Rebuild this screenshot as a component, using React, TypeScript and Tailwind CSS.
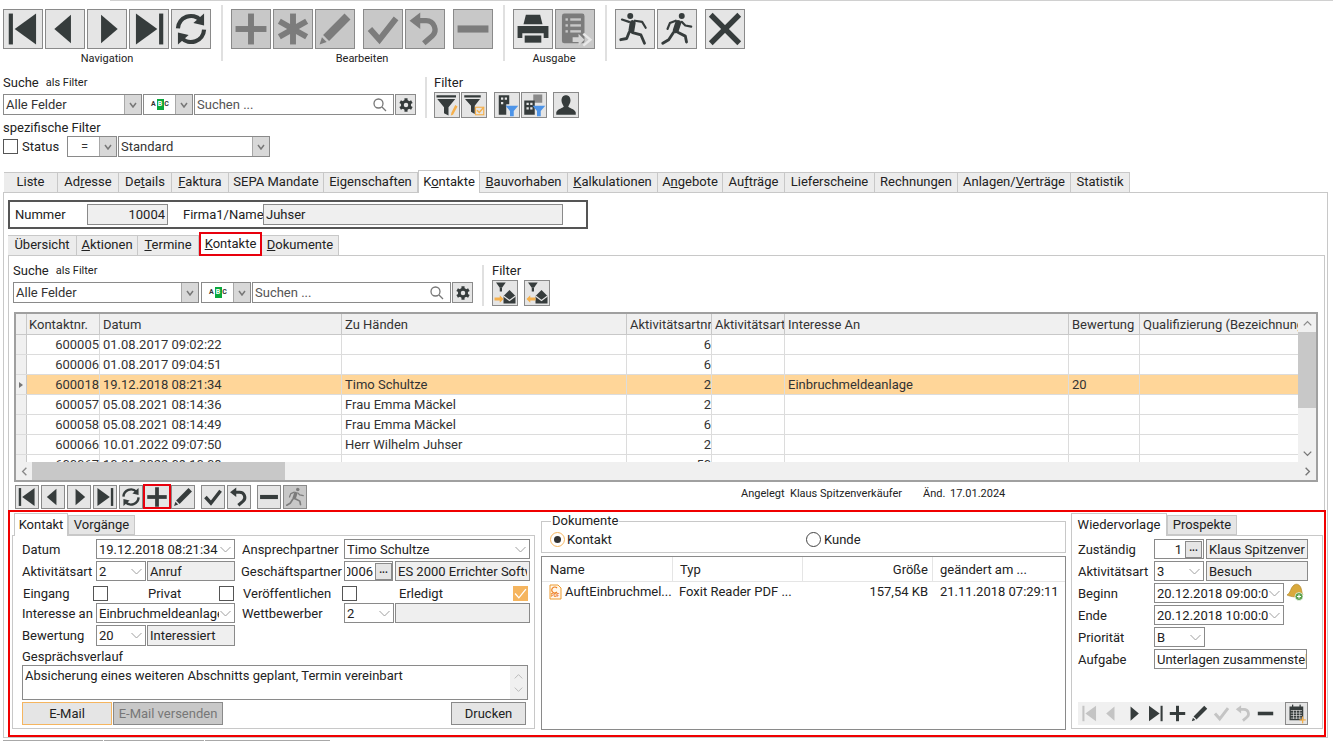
import type { ReactNode } from "react";

type IconName =
  | "first" | "prev" | "next" | "last" | "refresh" | "plus" | "asterisk" | "pencil" | "check" | "undo" | "minus"
  | "printer" | "report" | "run1" | "run2" | "close" | "funnelEdit" | "funnelCheck" | "houseFilter" | "officeFilter"
  | "person" | "mailIn" | "mailOut" | "calendar" | "gear";

// Toolbar glyphs, all drawn on the same 32x32 grid
function Icon({ name, className = "w-[38px] h-[38px]" }: { name: IconName; className?: string }) {
  const glyphs: Record<IconName, ReactNode> = {
    first: <><rect x="4" y="3" width="3.500" height="26" /><polygon points="27,3 27,29 9,16" /></>,
    prev: <polygon points="21,4 21,28 7,16" />,
    next: <polygon points="11,4 11,28 25,16" />,
    last: <><polygon points="5,3 5,29 23,16" /><rect x="24.500" y="3" width="3.500" height="26" /></>,
    refresh: (
      <>
        <path d="M5 15.5A11 11 0 0 1 24 8.500" fill="none" stroke="currentColor" strokeWidth="3.500" />
        <polygon points="27,3 27,13 18,11" />
        <path d="M27 16.500A11 11 0 0 1 8 23.500" fill="none" stroke="currentColor" strokeWidth="3.500" />
        <polygon points="5,29 5,19 14,21" />
      </>
    ),
    plus: <><rect x="13.500" y="3" width="5" height="26" /><rect x="3" y="13.500" width="26" height="5" /></>,
    asterisk: (
      <g stroke="currentColor" strokeWidth="5">
        <line x1="16" y1="3" x2="16" y2="29" />
        <line x1="4.500" y1="9.500" x2="27.500" y2="22.500" />
        <line x1="4.500" y1="22.500" x2="27.500" y2="9.500" />
      </g>
    ),
    pencil: <><polygon points="24,3 29,8 11,26 6,21" /><polygon points="5,23 9,27 3,29" /></>,
    check: <polyline points="5,16 13,25 27,7" fill="none" stroke="currentColor" strokeWidth="5" />,
    undo: (
      <>
        <path d="M10 9h7a7.500 7.500 0 0 1 5 13l-7 6" fill="none" stroke="currentColor" strokeWidth="4.500" />
        <polygon points="12,2 12,16 3,9" />
      </>
    ),
    minus: <rect x="3" y="13" width="26" height="6" />,
    printer: (
      <>
        <polygon points="10,4 22,4 24,12 8,12" />
        <path d="M3 13.500h26v10h-4v-4H7v4H3z" />
        <rect x="9" y="21.500" width="14" height="6" />
      </>
    ),
    report: (
      <>
        <rect x="5" y="3" width="19" height="25" rx="2" />
        <g fill="#c8c8c8">
          <rect x="8" y="7" width="2" height="2" /><rect x="12" y="7" width="9" height="2" />
          <rect x="8" y="12" width="2" height="2" /><rect x="12" y="12" width="9" height="2" />
          <rect x="8" y="17" width="2" height="2" /><rect x="12" y="17" width="9" height="2" />
        </g>
        <polygon points="14,23 19,23 19,20 24,25 19,30 19,27 14,27" fill="#d4d4d4" />
        <polyline points="23,20 29,25 23,30" fill="none" stroke="#e8e8e8" strokeWidth="2" />
      </>
    ),
    run1: (
      <>
        <circle cx="12" cy="5" r="2.500" />
        <g fill="none" stroke="currentColor" strokeLinecap="round" strokeLinejoin="round">
          <path d="M14 11l-1 6" strokeWidth="5" />
          <path d="M11 10L5 8M16 9l6 1 3 5" strokeWidth="1.800" />
          <path d="M14 19l7 2 3 7M11 19l-2 5-5 1" strokeWidth="2.400" />
        </g>
      </>
    ),
    run2: (
      <>
        <circle cx="20" cy="5" r="2.500" />
        <g fill="none" stroke="currentColor" strokeLinecap="round" strokeLinejoin="round">
          <path d="M17 11l-2 6" strokeWidth="5" />
          <path d="M15 9l-5 2-2 5M20 10l3 3 5 1" strokeWidth="1.800" />
          <path d="M17 19l6 3 1 5M13 19l-4 6-5 3" strokeWidth="2.400" />
        </g>
      </>
    ),
    close: (
      <g stroke="currentColor" strokeWidth="4.500">
        <line x1="4" y1="4" x2="28" y2="28" />
        <line x1="28" y1="4" x2="4" y2="28" />
      </g>
    ),
    funnelEdit: (
      <>
        <rect x="2" y="3" width="26" height="3" />
        <polygon points="3,8 27,8 18,19 18,30 12,27 12,19" />
        <polygon points="27,16 30,18 24,29 21,30 22,26" fill="#f5b04c" />
      </>
    ),
    funnelCheck: (
      <>
        <rect x="3" y="3" width="22" height="3" />
        <polygon points="4,8 24,8 17,17 17,28 12,25 12,17" />
        <rect x="18" y="19" width="11" height="10" fill="none" stroke="#f5b04c" strokeWidth="1.500" />
        <polyline points="20,23 23,26 29,19" fill="none" stroke="#f5b04c" strokeWidth="2" />
      </>
    ),
    houseFilter: (
      <>
        <path d="M5 3h14v12h-4v14H5z" />
        <g fill="#e5e5e5">
          <rect x="8" y="6" width="3" height="3" /><rect x="13" y="6" width="3" height="3" />
          <rect x="8" y="12" width="3" height="3" />
        </g>
        <polygon points="14,17 31,17 25,24 25,31 20,31 20,24" fill="#4d94e8" />
      </>
    ),
    officeFilter: (
      <>
        <rect x="15" y="2" width="12" height="11" fill="#8a8a8a" />
        <path d="M3 10h14v19H3z" />
        <g fill="#e5e5e5">
          <rect x="6" y="13" width="3" height="3" /><rect x="11" y="13" width="3" height="3" />
          <rect x="6" y="19" width="3" height="3" /><rect x="11" y="19" width="3" height="3" />
        </g>
        <polygon points="14,17 31,17 25,24 25,31 20,31 20,24" fill="#4d94e8" />
      </>
    ),
    person: <path d="M16 3c4 0 6 3 6 7 0 3-2 6-3 8 0 2 9 3 10 8v3H3v-3c1-5 10-6 10-8-1-2-3-5-3-8 0-4 2-7 6-7z" />,
    mailIn: (
      <>
        <polygon points="4,2 17,2 12,9 9,9" />
        <rect x="9" y="9" width="3" height="5" />
        <path d="M14 20l8-8 8 8v10H14z" />
        <polyline points="14,20 22,26 30,20" fill="none" stroke="#e5e5e5" strokeWidth="1.500" />
        <polygon points="2,22 9,22 9,19 14,24 9,29 9,26 2,26" fill="#f5b04c" />
      </>
    ),
    mailOut: (
      <>
        <polygon points="4,2 17,2 12,9 9,9" />
        <rect x="9" y="9" width="3" height="5" />
        <path d="M14 20l8-8 8 8v10H14z" />
        <polyline points="14,20 22,26 30,20" fill="none" stroke="#e5e5e5" strokeWidth="1.500" />
        <polygon points="14,22 7,22 7,19 2,24 7,29 7,26 14,26" fill="#f5b04c" />
      </>
    ),
    calendar: (
      <>
        <rect x="4" y="4" width="22" height="22" />
        <rect x="8" y="1" width="2" height="5" /><rect x="20" y="1" width="2" height="5" />
        <g fill="#e5e5e5">
          <rect x="6" y="10" width="18" height="1" /><rect x="6" y="14" width="18" height="1" />
          <rect x="6" y="18" width="18" height="1" /><rect x="6" y="22" width="18" height="1" />
          <rect x="10" y="10" width="1" height="14" /><rect x="15" y="10" width="1" height="14" />
          <rect x="20" y="10" width="1" height="14" />
        </g>
        <rect x="24" y="20" width="2" height="11" fill="#f5b04c" />
        <rect x="20" y="24.500" width="10" height="2" fill="#f5b04c" />
      </>
    ),
    gear: (
      <>
        <g stroke="currentColor" strokeWidth="5.500">
          <line x1="16" y1="4" x2="16" y2="28" />
          <line x1="5.600" y1="10" x2="26.400" y2="22" />
          <line x1="5.600" y1="22" x2="26.400" y2="10" />
        </g>
        <circle cx="16" cy="16" r="9" />
        <circle cx="16" cy="16" r="4" fill="#e5e5e5" />
      </>
    ),
  };
  return (
    <svg viewBox="0 0 32 32" fill="currentColor" className={className}>
      {glyphs[name]}
    </svg>
  );
}

function BigButton({ icon, off, className = "" }: { icon: IconName; off?: boolean; className?: string }) {
  return (
    <div
      className={`w-[40px] h-[40px] flex items-center justify-center border border-[#8a8a8a] ${
        off ? "bg-[#c8c8c8] text-[#7c7c7c]" : "bg-[#e5e5e5] text-[#363c3c]"
      } ${className}`}
    >
      <Icon name={icon} />
    </div>
  );
}

function MidButton({ icon, className = "" }: { icon: IconName; className?: string }) {
  return (
    <div className={`w-[26px] h-[26px] flex items-center justify-center border border-[#8a8a8a] bg-[#e5e5e5] text-[#363c3c] ${className}`}>
      <Icon name={icon} className="w-[24px] h-[24px]" />
    </div>
  );
}

function GearButton() {
  return (
    <div className="w-[21px] h-[21px] ml-px flex items-center justify-center border border-[#8a8a8a] bg-[#e5e5e5] text-[#363c3c]">
      <Icon name="gear" className="w-[18px] h-[18px]" />
    </div>
  );
}

function SmallButton({ icon, className = "" }: { icon: IconName; className?: string }) {
  return (
    <div className={`w-[24px] h-[24px] flex items-center justify-center border border-[#8a8a8a] bg-[#e5e5e5] text-[#363c3c] ${className}`}>
      <Icon name={icon} className="w-[22px] h-[22px]" />
    </div>
  );
}

function Chevron({ className, weight = "1" }: { className: string; weight?: string }) {
  return (
    <svg viewBox="0 0 12 7" className={`h-[7px] ${className}`} fill="none" stroke="currentColor" strokeWidth={weight}>
      <polyline points="1,1 6,6 11,1" />
    </svg>
  );
}

// Combo of the search bars: grey arrow cell on the right
function SearchCombo({ className, children }: { className: string; children: ReactNode }) {
  return (
    <div className={`flex items-stretch h-[21px] border border-[#8a8a8a] bg-white ${className}`}>
      <div className="flex-1 min-w-0 flex items-center pl-[2px] pt-px text-[#333] whitespace-nowrap overflow-hidden">{children}</div>
      <div className="w-[17px] shrink-0 flex items-center justify-center bg-[#d8d8d8] border-l border-[#a8a8a8]">
        <svg viewBox="0 0 8 6" className="w-[8px] h-[6px] text-[#777]" fill="none" stroke="currentColor" strokeWidth="1.500">
          <polyline points="1,1 4,5 7,1" />
        </svg>
      </div>
    </div>
  );
}

function AbcMark() {
  return (
    <div className="flex-1 flex items-center justify-center text-[7px] leading-none font-bold text-[#333] tracking-[1px] -mt-px">
      <span>A</span>
      <span className="bg-[#0aa83c] text-white px-[1px] py-[2px]">B</span>
      <span>C</span>
    </div>
  );
}

function SearchField({ className }: { className: string }) {
  return (
    <div className={`flex items-center justify-between h-[21px] border border-[#8a8a8a] bg-white pl-[2px] pr-[6px] text-[#555] ${className}`}>
      <span className="pt-px">Suchen ...</span>
      <svg viewBox="0 0 14 14" className="w-[14px] h-[14px] text-[#777]" fill="none" stroke="currentColor" strokeWidth="1.300">
        <circle cx="5.500" cy="5.500" r="4.500" />
        <line x1="9" y1="9" x2="13" y2="13" />
      </svg>
    </div>
  );
}

// Form combo with the thin chevron
function Combo({ className, children }: { className: string; children: ReactNode }) {
  return (
    <div className={`flex items-center justify-between border border-[#8a8a8a] bg-white pl-[2px] pr-[2px] pt-px whitespace-nowrap overflow-hidden ${className}`}>
      <span className="overflow-hidden flex-1 min-w-0">{children}</span>
      <Chevron className="w-[13px] text-[#a0a0a0] shrink-0 -mt-px" />
    </div>
  );
}

function ReadOnly({ className, children }: { className: string; children?: ReactNode }) {
  return (
    <div className={`flex items-center border border-[#8a8a8a] bg-[#efefef] pl-[2px] pt-px whitespace-nowrap ${className}`}>
      <span className="min-w-0 overflow-hidden mr-[2px]">{children}</span>
    </div>
  );
}

function Dots() {
  return (
    <div className="w-[17px] h-[17px] shrink-0 flex items-center justify-center border border-[#8a8a8a] bg-[#e5e5e5] -mt-px text-[10px] leading-none font-bold pb-[3px]">
      ...
    </div>
  );
}

function Check({ className = "" }: { className?: string }) {
  return <div className={`w-[15px] h-[15px] border border-[#555] bg-white shrink-0 ${className}`} />;
}

const mainTabs: { pre: string; key?: string; post?: string; w: string; active?: boolean }[] = [
  { pre: "Liste", w: "w-[54px]" },
  { pre: "Ad", key: "r", post: "esse", w: "w-[61px]" },
  { pre: "De", key: "t", post: "ails", w: "w-[53px]" },
  { pre: "", key: "F", post: "aktura", w: "w-[57px]" },
  { pre: "SEPA Mandate", w: "w-[95px]" },
  { pre: "Ei", key: "g", post: "enschaften", w: "w-[94px]" },
  { pre: "K", key: "o", post: "ntakte", w: "w-[62px]", active: true },
  { pre: "", key: "B", post: "auvorhaben", w: "w-[88px]" },
  { pre: "", key: "K", post: "alkulationen", w: "w-[90px]" },
  { pre: "A", key: "n", post: "gebote", w: "w-[65px]" },
  { pre: "Au", key: "f", post: "träge", w: "w-[62px]" },
  { pre: "Lieferscheine", w: "w-[90px]" },
  { pre: "Rechnun", key: "g", post: "en", w: "w-[83px]" },
  { pre: "Anlagen/", key: "V", post: "erträge", w: "w-[113px]" },
  { pre: "Statistik", w: "w-[59px]" },
];

const subTabs: { pre: string; key?: string; post?: string; w: string }[] = [
  { pre: "Übersicht", w: "w-[69px]" },
  { pre: "", key: "A", post: "ktionen", w: "w-[61px]" },
  { pre: "", key: "T", post: "ermine", w: "w-[61px]" },
];

function Label({ pre, k, post }: { pre: string; k?: string; post?: string }) {
  return (
    <span>
      {pre}
      {k && <u>{k}</u>}
      {post}
    </span>
  );
}

const gridCols = ["w-[73px]", "w-[242px]", "w-[285px]", "w-[85px]", "w-[73px]", "w-[284px]", "w-[71px]", "w-[160px]"];
const gridHead = ["Kontaktnr.", "Datum", "Zu Händen", "Aktivitätsartnr", "Aktivitätsart", "Interesse An", "Bewertung", "Qualifizierung (Bezeichnung)"];
const gridRows: { cells: string[]; sel?: boolean }[] = [
  { cells: ["600005", "01.08.2017 09:02:22", "", "6", "", "", "", ""] },
  { cells: ["600006", "01.08.2017 09:04:51", "", "6", "", "", "", ""] },
  { cells: ["600018", "19.12.2018 08:21:34", "Timo Schultze", "2", "", "Einbruchmeldeanlage", "20", ""], sel: true },
  { cells: ["600057", "05.08.2021 08:14:36", "Frau Emma Mäckel", "2", "", "", "", ""] },
  { cells: ["600058", "05.08.2021 08:14:49", "Frau Emma Mäckel", "6", "", "", "", ""] },
  { cells: ["600066", "10.01.2022 09:07:50", "Herr Wilhelm Juhser", "2", "", "", "", ""] },
  { cells: ["600067", "10.01.2022 09:10:08", "", "50", "", "", "", ""] },
];

function ContactGrid() {
  return (
    <div className="ml-[5px] mt-[6px] w-[1304px] h-[170px] border-2 border-[#a0a0a0] flex flex-col">
      <div className="flex flex-1 min-h-0">
        <div className="flex-1 min-w-0 overflow-hidden">
          <div className="flex h-[21px] bg-[#f0f0f0] border-b border-[#c8c8c8] text-[#333]">
            <div className="w-[11px] shrink-0 border-r border-[#c8c8c8]" />
            {gridHead.map((h, i) => (
              <div
                key={h}
                className={`${gridCols[i]} shrink-0 border-r border-[#c8c8c8] overflow-hidden whitespace-nowrap leading-[21px] ${
                  i === 0 ? "pl-[2px]" : "pl-[3px]"
                }`}
              >
                {h}
              </div>
            ))}
          </div>
          {gridRows.map((row) => (
            <div key={row.cells[0]} className={`flex h-[20px] border-b border-[#dcdcdc] text-[#333] ${row.sel ? "bg-[#ffd699]" : "bg-white"}`}>
              <div className="w-[11px] shrink-0 bg-[#f0f0f0] border-r border-[#c8c8c8] flex items-center justify-center">
                {row.sel && <div className="w-0 h-0 border-y-[3px] border-y-transparent border-l-[4px] border-l-[#777]" />}
              </div>
              {row.cells.map((c, i) => (
                <div
                  key={i}
                  className={`${gridCols[i]} shrink-0 border-r border-[#dcdcdc] overflow-hidden whitespace-nowrap leading-[20px] ${
                    i === 0 || i === 3 ? "text-right" : "pl-[3px]"
                  }`}
                >
                  {c}
                </div>
              ))}
            </div>
          ))}
        </div>
        <div className="w-[18px] shrink-0 bg-[#f0f0f0] flex flex-col items-center">
          <div className="h-[18px] flex items-center justify-center">
            <Chevron className="w-[9px] text-[#8a8a8a] rotate-180" weight="1.800" />
          </div>
          <div className="w-full h-[76px] bg-[#c8c8c8]" />
          <div className="flex-1" />
          <div className="h-[18px] flex items-center justify-center">
            <Chevron className="w-[9px] text-[#777]" weight="1.800" />
          </div>
        </div>
      </div>
      <div className="h-[18px] shrink-0 bg-[#f0f0f0] flex items-stretch">
        <div className="w-[16px] flex items-center justify-center">
          <Chevron className="w-[9px] text-[#8a8a8a] rotate-90" weight="1.800" />
        </div>
        <div className="w-[253px] bg-[#c8c8c8]" />
        <div className="flex-1" />
        <div className="w-[18px] flex items-center justify-center">
          <Chevron className="w-[9px] text-[#777] -rotate-90" weight="1.800" />
        </div>
      </div>
    </div>
  );
}

function FormTab({ active, className, children }: { active?: boolean; className: string; children: ReactNode }) {
  return (
    <div
      className={`flex items-center justify-center border border-[#c8c8c8] ${
        active ? "h-[23px] bg-white border-b-0 relative z-10 -mb-px" : "h-[20px] bg-[#e5e5e5]"
      } ${className}`}
    >
      {children}
    </div>
  );
}

function KontaktForm() {
  return (
    <div className="ml-[2px] w-[523px] flex flex-col pt-px">
      <div className="flex items-end h-[22px] pl-[2px]">
        <FormTab active className="w-[54px]">Kontakt</FormTab>
        <FormTab className="w-[67px]">Vorgänge</FormTab>
      </div>
      <div className="h-[194px] border border-[#c8c8c8] pl-[9px] pt-[3px] flex flex-col">
        <div className="flex h-[22px]">
          <span className="w-[74px] leading-[22px]">Datum</span>
          <Combo className="w-[139px] h-[20px]">19.12.2018 08:21:34</Combo>
          <span className="w-[102px] ml-[7px] leading-[22px]">Ansprechpartner</span>
          <Combo className="w-[186px] h-[20px]">Timo Schultze</Combo>
        </div>
        <div className="flex h-[22px]">
          <span className="w-[74px] leading-[22px]">Aktivitätsart</span>
          <Combo className="w-[50px] h-[20px]">2</Combo>
          <ReadOnly className="w-[88px] h-[20px] ml-px">Anruf</ReadOnly>
          <span className="w-[103px] ml-[6px] leading-[22px] whitespace-nowrap">Geschäftspartner</span>
          <div className="w-[49px] h-[20px] flex items-center justify-end border border-[#8a8a8a] overflow-hidden pt-px">
            <span className="w-[26px] mr-[2px] overflow-hidden whitespace-nowrap [direction:rtl]">0006</span>
            <Dots />
          </div>
          <ReadOnly className="w-[135px] h-[20px] ml-[2px]">ES 2000 Errichter Software</ReadOnly>
        </div>
        <div className="flex h-[20px] items-center">
          <span className="w-[70px] ml-px pt-px">Eingang</span>
          <Check />
          <span className="w-[71px] ml-[40px] pt-px">Privat</span>
          <Check />
          <span className="w-[99px] ml-[9px] pt-px">Veröffentlichen</span>
          <Check />
          <span className="w-[114px] ml-[42px] pt-px">Erledigt</span>
          <div className="w-[15px] h-[15px] bg-[#f5b55f] flex items-center justify-center">
            <svg viewBox="0 0 12 12" className="w-[13px] h-[13px]" fill="none" stroke="white" strokeWidth="1.200">
              <polyline points="1,6 4.500,10 11,2" />
            </svg>
          </div>
        </div>
        <div className="flex h-[22px]">
          <span className="w-[74px] leading-[22px] whitespace-nowrap">Interesse an</span>
          <Combo className="w-[139px] h-[20px]">Einbruchmeldeanlage</Combo>
          <span className="w-[102px] ml-[7px] leading-[22px]">Wettbewerber</span>
          <Combo className="w-[50px] h-[20px]">2</Combo>
          <ReadOnly className="w-[135px] h-[20px] ml-px" />
        </div>
        <div className="flex h-[23px]">
          <span className="w-[74px] leading-[22px]">Bewertung</span>
          <Combo className="w-[50px] h-[21px]">20</Combo>
          <ReadOnly className="w-[88px] h-[21px] ml-px">Interessiert</ReadOnly>
        </div>
        <div className="h-[17px] leading-[17px]">Gesprächsverlauf</div>
        <div className="w-[506px] h-[35px] border border-[#8a8a8a] flex justify-between pl-[2px]">
          <span className="leading-[20px]">Absicherung eines weiteren Abschnitts geplant, Termin vereinbart</span>
          <div className="w-[17px] bg-[#f0f0f0] flex flex-col items-center justify-center gap-[6px]">
            <Chevron className="w-[9px] text-[#aaa] rotate-180" />
            <Chevron className="w-[9px] text-[#aaa]" />
          </div>
        </div>
        <div className="flex mt-[2px] w-[504px]">
          <div className="w-[90px] h-[23px] flex items-center justify-center border border-[#f5b55f] bg-[#e5e5e5]">E-Mail</div>
          <div className="w-[110px] h-[23px] ml-px flex items-center justify-center border border-[#8a8a8a] bg-[#c8c8c8] text-[#777]">
            E-Mail versenden
          </div>
          <div className="w-[75px] h-[23px] ml-auto flex items-center justify-center border border-[#8a8a8a] bg-[#e5e5e5]">Drucken</div>
        </div>
      </div>
    </div>
  );
}

function Radio({ on }: { on?: boolean }) {
  return (
    <div className={`w-[15px] h-[15px] rounded-full border flex items-center justify-center bg-white ${on ? "border-[#f5b55f]" : "border-[#444]"}`}>
      {on && <div className="w-[7px] h-[7px] rounded-full bg-[#333]" />}
    </div>
  );
}

function DocumentsPanel() {
  return (
    <div className="ml-[6px] w-[525px] flex flex-col pt-[2px]">
      <fieldset className="h-[39px] border border-[#c8c8c8] pl-[8px]">
        <legend className="ml-px px-px leading-[14px]">Dokumente</legend>
        <div className="flex items-center h-[15px] mt-[4px]">
          <Radio on />
          <span className="ml-[2px] w-[239px]">Kontakt</span>
          <Radio />
          <span className="ml-[3px]">Kunde</span>
        </div>
      </fieldset>
      <div className="h-[174px] mt-[3px] border border-[#8a8a8a]">
        <div className="flex h-[25px] border-b border-[#e5e5e5] leading-[25px]">
          <div className="w-[131px] pl-[8px] border-r border-[#e5e5e5]">Name</div>
          <div className="w-[130px] pl-[7px] border-r border-[#e5e5e5]">Typ</div>
          <div className="w-[130px] pr-[4px] text-right border-r border-[#e5e5e5]">Größe</div>
          <div className="flex-1 pl-[7px]">geändert am ...</div>
        </div>
        <div className="flex h-[20px] leading-[20px]">
          <div className="w-[131px] pl-[7px] flex items-center">
            <svg viewBox="0 0 13 16" className="w-[13px] h-[16px] shrink-0">
              <path d="M1 1h8l3 3v11H1z" fill="#fff7ea" stroke="#ee9b2f" />
              <text x="2" y="13" fontSize="4.500" fontWeight="700" fill="#ee7f1f">PDF</text>
              <path d="M8 4a3 3 0 1 0 0 4" fill="none" stroke="#ee7f1f" strokeWidth="1.200" />
            </svg>
            <span className="ml-[3px] whitespace-nowrap">AuftEinbruchmel...</span>
          </div>
          <div className="w-[130px] pl-[6px] whitespace-nowrap">Foxit Reader PDF ...</div>
          <div className="w-[130px] pr-[5px] text-right">157,54 KB</div>
          <div className="flex-1 pl-[7px]">21.11.2018 07:29:11</div>
        </div>
      </div>
    </div>
  );
}

function MiniIcon({ name, off }: { name: IconName; off?: boolean }) {
  return (
    <div className={`w-[22px] flex justify-center ${off ? "text-[#c4c4c4]" : "text-[#363c3c]"}`}>
      <Icon name={name} className="w-[19px] h-[19px]" />
    </div>
  );
}

function WiedervorlageForm() {
  return (
    <div className="ml-[5px] w-[252px] flex flex-col pt-px">
      <div className="flex items-end h-[22px]">
        <FormTab active className="w-[96px]">Wiedervorlage</FormTab>
        <FormTab className="w-[70px]">Prospekte</FormTab>
      </div>
      <div className="h-[194px] border border-[#c8c8c8] pl-[6px] pt-[3px] flex flex-col">
        <div className="flex h-[22px]">
          <span className="w-[76px] leading-[22px]">Zuständig</span>
          <div className="w-[50px] h-[20px] flex items-center justify-end border border-[#8a8a8a] pr-px pt-px">
            <span className="mr-[3px]">1</span>
            <Dots />
          </div>
          <ReadOnly className="w-[102px] h-[20px] ml-[2px]">Klaus Spitzenverkäufer</ReadOnly>
        </div>
        <div className="flex h-[22px]">
          <span className="w-[76px] leading-[22px]">Aktivitätsart</span>
          <Combo className="w-[50px] h-[20px]">3</Combo>
          <ReadOnly className="w-[102px] h-[20px] ml-[2px]">Besuch</ReadOnly>
        </div>
        <div className="flex h-[22px]">
          <span className="w-[76px] leading-[22px]">Beginn</span>
          <Combo className="w-[130px] h-[20px]">20.12.2018 09:00:00</Combo>
          <svg viewBox="0 0 18 18" className="w-[18px] h-[18px] ml-[2px]">
            <path d="M1 12C5 10 4 5 8 2c3-2 6 0 7 3 1 3 1 6 2 7-5 3-12 2-16 0z" fill="#d9a93c" stroke="#a87f22" strokeWidth="0.600" />
            <circle cx="13" cy="13.500" r="4" fill="#5aa04a" stroke="white" strokeWidth="0.700" />
            <path d="M11 13.500h4M13 11.500v4" stroke="white" strokeWidth="1.100" />
          </svg>
        </div>
        <div className="flex h-[22px]">
          <span className="w-[76px] leading-[22px]">Ende</span>
          <Combo className="w-[130px] h-[20px]">20.12.2018 10:00:00</Combo>
        </div>
        <div className="flex h-[22px]">
          <span className="w-[76px] leading-[22px]">Priorität</span>
          <Combo className="w-[51px] h-[20px]">B</Combo>
        </div>
        <div className="flex h-[22px]">
          <span className="w-[76px] leading-[22px]">Aufgabe</span>
          <div className="w-[153px] h-[20px] border border-[#8a8a8a] pl-[2px] leading-[20px] overflow-hidden whitespace-nowrap">
            Unterlagen zusammenstellen
          </div>
        </div>
        <div className="mt-[31px] w-[230px] h-[23px] bg-[#f0f0f0] flex items-center">
          <MiniIcon name="first" off />
          <MiniIcon name="prev" off />
          <MiniIcon name="next" />
          <MiniIcon name="last" />
          <MiniIcon name="plus" />
          <MiniIcon name="pencil" />
          <MiniIcon name="check" off />
          <MiniIcon name="undo" off />
          <MiniIcon name="minus" />
          <div className="w-[23px] h-[23px] ml-auto flex items-center justify-center border border-[#8a8a8a] bg-[#e5e5e5] text-[#363c3c]">
            <Icon name="calendar" className="w-[20px] h-[20px]" />
          </div>
        </div>
      </div>
    </div>
  );
}

export default function App() {
  return (
    <div className="w-[1333px] h-[741px] overflow-hidden bg-white text-[#222] text-[13px] leading-[16px] font-['Roboto',sans-serif]">
      <div className="ml-[110px] h-px bg-[#d0d0d0]" />

      {/* Main toolbar */}
      <div className="flex h-[56px] mt-[4px] pl-[3px]">
        <div className="flex flex-col items-center pt-[4px]">
          <div className="flex gap-[2px]">
            <BigButton icon="first" />
            <BigButton icon="prev" />
            <BigButton icon="next" />
            <BigButton icon="last" />
            <BigButton icon="refresh" />
          </div>
          <span className="mt-[2px] text-[11px]">Navigation</span>
        </div>
        <div className="w-[2px] h-full bg-[#e0e0e0] ml-[10px] mr-[8px]" />
        <div className="flex flex-col items-center pt-[4px]">
          <div className="flex">
            <BigButton icon="plus" off />
            <BigButton icon="asterisk" off className="ml-[2px]" />
            <BigButton icon="pencil" off className="ml-[2px]" />
            <BigButton icon="check" off className="ml-[8px]" />
            <BigButton icon="undo" off className="ml-[2px]" />
            <BigButton icon="minus" off className="ml-[8px]" />
          </div>
          <span className="mt-[2px] text-[11px]">Bearbeiten</span>
        </div>
        <div className="w-[2px] h-full bg-[#e0e0e0] ml-[10px] mr-[8px]" />
        <div className="flex flex-col items-center pt-[4px]">
          <div className="flex gap-[2px]">
            <BigButton icon="printer" />
            <BigButton icon="report" off />
          </div>
          <span className="mt-[2px] text-[11px]">Ausgabe</span>
        </div>
        <div className="w-[2px] h-full bg-[#e0e0e0] ml-[10px] mr-[8px]" />
        <div className="flex pt-[4px] items-start">
          <BigButton icon="run1" />
          <BigButton icon="run2" className="ml-[2px]" />
          <BigButton icon="close" className="ml-[8px]" />
        </div>
      </div>

      {/* Search */}
      <div className="flex h-[41px] mt-[16px] pl-[3px]">
        <div className="w-[413px] flex flex-col">
          <div className="h-[17px] flex items-start gap-[7px] leading-[12px]">
            <span>Suche</span>
            <span className="text-[11px]">als Filter</span>
          </div>
          <div className="flex">
            <SearchCombo className="w-[139px]">Alle Felder</SearchCombo>
            <SearchCombo className="w-[50px] ml-px">
              <AbcMark />
            </SearchCombo>
            <SearchField className="w-[200px] ml-px" />
            <GearButton />
          </div>
        </div>
        <div className="w-[2px] h-full bg-[#e0e0e0] ml-[9px] mr-[7px]" />
        <div className="flex flex-col">
          <div className="h-[15px] leading-[12px]">Filter</div>
          <div className="flex">
            <MidButton icon="funnelEdit" />
            <MidButton icon="funnelCheck" className="ml-px" />
            <MidButton icon="houseFilter" className="ml-[7px]" />
            <MidButton icon="officeFilter" className="ml-px" />
            <MidButton icon="person" className="ml-[6px]" />
          </div>
        </div>
      </div>

      <div className="h-[16px] mt-[2px] pl-[3px]">spezifische Filter</div>
      <div className="flex h-[21px] items-center pl-[3px]">
        <Check />
        <span className="ml-[4px] w-[45px] pt-px">Status</span>
        <SearchCombo className="w-[50px]">
          <span className="flex-1 text-center">=</span>
        </SearchCombo>
        <SearchCombo className="w-[152px] ml-px">Standard</SearchCombo>
      </div>

      {/* Main tabs */}
      <div className="flex items-end h-[22px] mt-[13px] pl-[4px]">
        {mainTabs.map((t) => (
          <div
            key={t.pre + (t.key ?? "") + t.w}
            className={`${t.w} shrink-0 flex items-center justify-center border-r border-t border-[#c8c8c8] pb-px ${
              t.active ? "h-[23px] bg-white border-l relative z-10 -mb-px" : "h-[20px] bg-[#ececec]"
            }`}
          >
            <Label pre={t.pre} k={t.key} post={t.post} />
          </div>
        ))}
      </div>

      {/* Outer panel */}
      <div className="ml-[3px] w-[1325px] h-[546px] border border-[#c8c8c8] flex flex-col">
        <div className="ml-[4px] mt-[7px] w-[580px] h-[29px] border-2 border-[#555] flex items-center pl-[5px]">
          <span className="w-[72px]">Nummer</span>
          <ReadOnly className="w-[81px] h-[21px] justify-end">10004</ReadOnly>
          <span className="ml-[15px] w-[80px]">Firma1/Name</span>
          <ReadOnly className="w-[300px] h-[21px]">Juhser</ReadOnly>
        </div>

        <div className="flex items-end h-[23px] mt-[3px] ml-[4px]">
          {subTabs.map((t) => (
            <div key={t.w + t.pre + t.key} className={`${t.w} h-[20px] flex items-center justify-center bg-[#ececec] border-r border-t border-[#c8c8c8] pb-px`}>
              <Label pre={t.pre} k={t.key} post={t.post} />
            </div>
          ))}
          <div className="w-[63px] h-[24px] flex items-center justify-center border-2 border-[#e8000d] bg-white relative z-10 -mb-px">
            <Label pre="" k="K" post="ontakte" />
          </div>
          <div className="w-[77px] h-[20px] flex items-center justify-center bg-[#ececec] border-r border-t border-[#c8c8c8] pb-px">
            <Label pre="" k="D" post="okumente" />
          </div>
        </div>

        {/* Inner panel */}
        <div className="ml-[4px] w-[1317px] border-t border-x border-[#c8c8c8] flex flex-col">
          <div className="flex h-[41px] mt-[9px] pl-[4px]">
            <div className="w-[460px] flex flex-col">
              <div className="h-[17px] flex items-start gap-[7px] leading-[12px]">
                <span>Suche</span>
                <span className="text-[11px]">als Filter</span>
              </div>
              <div className="flex">
                <SearchCombo className="w-[186px]">Alle Felder</SearchCombo>
                <SearchCombo className="w-[50px] ml-[2px]">
                  <AbcMark />
                </SearchCombo>
                <SearchField className="w-[199px] ml-px" />
                <GearButton />
              </div>
            </div>
            <div className="w-[2px] h-full bg-[#e0e0e0] ml-[9px] mr-[8px]" />
            <div className="flex flex-col">
              <div className="h-[15px] leading-[11px]">Filter</div>
              <div className="flex">
                <MidButton icon="mailIn" />
                <MidButton icon="mailOut" className="ml-[6px]" />
              </div>
            </div>
          </div>

          <ContactGrid />

          <div className="flex items-center h-[25px] mt-[2px] pl-[6px] mb-px">
            <SmallButton icon="first" />
            <SmallButton icon="prev" className="ml-[2px]" />
            <SmallButton icon="next" className="ml-[2px]" />
            <SmallButton icon="last" className="ml-[2px]" />
            <SmallButton icon="refresh" className="ml-[2px]" />
            <div className="w-[28px] h-[25px] flex items-center justify-center border-2 border-[#e8000d] bg-[#e5e5e5] text-[#363c3c]">
              <Icon name="plus" className="w-[24px] h-[24px]" />
            </div>
            <SmallButton icon="pencil" />
            <SmallButton icon="check" className="ml-[6px]" />
            <SmallButton icon="undo" className="ml-[2px]" />
            <SmallButton icon="minus" className="ml-[6px]" />
            <div className="w-[24px] h-[24px] ml-[2px] flex items-center justify-center border border-[#8a8a8a] bg-[#c8c8c8] text-[#7c7c7c]">
              <Icon name="run2" className="w-[22px] h-[22px]" />
            </div>
            <div className="ml-[434px] flex text-[11px] mt-[-5px]">
              <span className="w-[49px]">Angelegt</span>
              <span className="w-[133px]">Klaus Spitzenverkäufer</span>
              <span className="w-[27px]">Änd.</span>
              <span>17.01.2024</span>
            </div>
          </div>
        </div>

        {/* Detail area, marked in red */}
        <div className="ml-[4px] w-[1318px] h-[227px] border-2 border-[#f00000] flex">
          <KontaktForm />
          <DocumentsPanel />
          <WiedervorlageForm />
        </div>
      </div>

      <div className="flex pl-[3px] mt-[2px] gap-px">
        <div className="w-[100px] h-px bg-[#a8a8a8]" />
        <div className="w-[100px] h-px bg-[#a8a8a8]" />
        <div className="w-[125px] h-px bg-[#a8a8a8]" />
      </div>
    </div>
  );
}
